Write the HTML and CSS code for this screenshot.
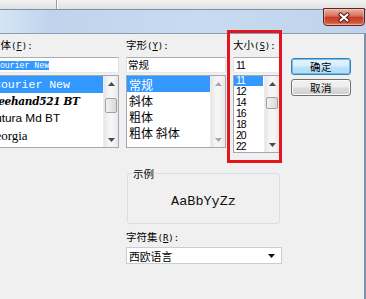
FILE: index.html
```html
<!DOCTYPE html>
<html lang="zh-CN">
<head>
<meta charset="utf-8">
<title>字体</title>
<link rel="stylesheet" href="styles.css">
</head>
<body>
<div class="screen">
  <div class="behind"><span class="behind-sep"></span></div>
  <div class="dialog">
    <div class="titlebar">
      <div class="close-btn">
        <svg width="14" height="11" viewBox="0 0 14 11">
          <path d="M3.5 2.5 L10.5 8.5 M10.5 2.5 L3.5 8.5" stroke="#4a1a14" stroke-width="4.2" stroke-linecap="round"/>
          <path d="M3.5 2.5 L10.5 8.5 M10.5 2.5 L3.5 8.5" stroke="#ffffff" stroke-width="2.2" stroke-linecap="round"/>
        </svg>
      </div>
    </div>
    <div class="client">
      <div class="top">
        <div class="col col-font">
          <div class="lbl">字体<span class="k">(<u>F</u>):</span></div>
          <div class="edit edit-font"><span class="hl">Courier New</span></div>
          <div class="list list-std">
            <div class="items">
              <div class="item row-font sel f-courier">Courier New</div>
              <div class="item row-font f-freehand">Freehand521 BT</div>
              <div class="item row-font f-futura">Futura Md BT</div>
              <div class="item row-font f-georgia">Georgia</div>
            </div>
            <div class="sb">
              <div class="sb-btn"><svg width="7" height="4" viewBox="0 0 7 4"><path d="M0 4 L3.5 0 L7 4Z" class="arr"/></svg></div>
              <div class="sb-track"><div class="thumb thumb-font"></div></div>
              <div class="sb-btn"><svg width="7" height="4" viewBox="0 0 7 4"><path d="M0 0 L3.5 4 L7 0Z" class="arr"/></svg></div>
            </div>
          </div>
        </div>

        <div class="col col-style">
          <div class="lbl">字形<span class="k">(<u>Y</u>):</span></div>
          <div class="edit edit-style">常规</div>
          <div class="list list-std">
            <div class="items">
              <div class="item row-style sel">常规</div>
              <div class="item row-style">斜体</div>
              <div class="item row-style">粗体</div>
              <div class="item row-style">粗体 斜体</div>
            </div>
            <div class="sb">
              <div class="sb-btn"><svg width="7" height="4" viewBox="0 0 7 4"><path d="M0 4 L3.5 0 L7 4Z" class="arr dim"/></svg></div>
              <div class="sb-track"></div>
              <div class="sb-btn"><svg width="7" height="4" viewBox="0 0 7 4"><path d="M0 0 L3.5 4 L7 0Z" class="arr dim"/></svg></div>
            </div>
          </div>
        </div>

        <div class="col col-size">
          <div class="lbl">大小<span class="k">(<u>S</u>):</span></div>
          <div class="edit edit-size">11</div>
          <div class="list list-size">
            <div class="items items-size">
              <div class="item row-size sel">11</div>
              <div class="item row-size">12</div>
              <div class="item row-size">14</div>
              <div class="item row-size">16</div>
              <div class="item row-size">18</div>
              <div class="item row-size">20</div>
              <div class="item row-size">22</div>
            </div>
            <div class="sb">
              <div class="sb-btn"><svg width="7" height="4" viewBox="0 0 7 4"><path d="M0 4 L3.5 0 L7 4Z" class="arr"/></svg></div>
              <div class="sb-track"><div class="thumb thumb-size"></div></div>
              <div class="sb-btn"><svg width="7" height="4" viewBox="0 0 7 4"><path d="M0 0 L3.5 4 L7 0Z" class="arr"/></svg></div>
            </div>
          </div>
        </div>

        <div class="col col-btn">
          <div class="btn btn-default">确定</div>
          <div class="btn">取消</div>
        </div>
      </div>

      <div class="bottom">
        <div class="group">
          <div class="group-title">示例</div>
          <div class="sample-text">AaBbYyZz</div>
        </div>
        <div class="lbl charset-lbl">字符集<span class="k">(<u>R</u>):</span></div>
        <div class="combo">
          <span class="combo-text">西欧语言</span>
          <svg width="7" height="4" viewBox="0 0 7 4"><path d="M0 0 L3.5 4 L7 0Z" fill="#111"/></svg>
        </div>
      </div>
    </div>
  </div>
  <div class="mark"></div>
</div>
</body>
</html>
```
FILE: styles.css
```css
* { box-sizing: border-box; }
html, body { margin: 0; padding: 0; }
body {
  width: 366px;
  height: 299px;
  overflow: hidden;
  background: #f0f0f0;
  font-family: "Noto Sans CJK SC", sans-serif;
  color: #000;
}
.screen {
  position: relative;
  width: 366px;
  height: 299px;
  overflow: hidden;
  display: flex;
  flex-direction: column;
}
.behind {
  height: 9px;
  flex: none;
  background: linear-gradient(#f3f3f3, #e0e0e0);
  display: flex;
  padding-left: 56px;
}
.behind-sep {
  width: 1px;
  background: #9c9c9c;
  box-shadow: 1px 0 0 #ffffff;
}
.dialog {
  flex: 1;
  display: flex;
  flex-direction: column;
  min-height: 0;
}
.titlebar {
  height: 25px;
  flex: none;
  border-top: 1px solid #7c8fa6;
  border-bottom: 1px solid #8a9db5;
  background: linear-gradient(90deg, #d5e5f5 0%, #bfd4ec 14%, #c7dbf0 55%, #bed3eb 100%);
  display: flex;
  justify-content: flex-end;
  align-items: flex-start;
  padding-right: 1px;
}
.close-btn {
  width: 42px;
  height: 18px;
  margin-top: -2px;
  border: 1px solid #5b2820;
  border-radius: 0 0 4px 4px;
  background: linear-gradient(#ebb3a6 0%, #d96d58 45%, #c63d25 52%, #d05539 85%, #e48a6b 100%);
  box-shadow: inset 0 0 0 1px rgba(255, 220, 210, 0.45);
  display: flex;
  align-items: center;
  justify-content: center;
}
.client {
  flex: 1;
  position: relative;
  border-right: 2px solid #7f92a9;
  padding-top: 5px;
}
.top {
  display: flex;
  align-items: flex-start;
  margin-left: -10px;
}
.col { display: flex; flex-direction: column; }
.col-font { width: 129px; }
.col-style { width: 100px; margin-left: 7px; }
.col-size { width: 47px; margin-left: 7px; }
.col-btn { width: 60px; margin-left: 11px; margin-top: 19px; gap: 4px; }

.lbl {
  height: 12px;
  line-height: 12px;
  font-size: 10.5px;
  white-space: nowrap;
}
.k {
  font-family: "DejaVu Sans Mono", monospace;
  font-size: 9px;
}
.k u { text-underline-offset: 1px; }

.edit {
  margin-top: 6px;
  height: 16px;
  background: #fff;
  border: 1px solid;
  border-color: #abadb3 #dbdfe6 #e3e9ef #e2e3ea;
  display: flex;
  align-items: center;
  white-space: nowrap;
  overflow: hidden;
}
.edit-font {
  padding-left: 4px;
  font-family: "Liberation Mono", monospace;
  font-size: 8.2px;
}
.hl {
  background: #3399ff;
  color: #fff;
  line-height: 9px;
  height: 9px;
  margin-top: 1px;
}
.edit-style {
  padding-left: 1px;
  font-size: 10.5px;
  line-height: 14px;
}
.edit-size {
  padding-left: 2px;
  font-family: "Liberation Sans", sans-serif;
  font-size: 10.5px;
  letter-spacing: -1px;
}

.list {
  margin-top: 2px;
  background: #fff;
  border: 1px solid #a3a9b1;
  display: flex;
  overflow: hidden;
}
.list-std { height: 73px; }
.list-size { height: 78px; }
.items {
  flex: 1;
  min-width: 0;
  overflow: hidden;
}
.items-size { margin-top: -1px; }
.item {
  white-space: nowrap;
  padding-left: 3px;
}
.item.sel { background: #3399ff; color: #fff; }

.row-font { height: 17px; line-height: 17px; }
.f-courier { font-family: "Liberation Mono", monospace; font-size: 11.5px; }
.f-freehand {
  font-family: "DejaVu Serif", serif;
  font-style: italic;
  font-weight: bold;
  font-size: 10.5px;
  letter-spacing: -0.3px;
  text-indent: -8px;
}
.f-futura { font-family: "Liberation Sans", sans-serif; font-size: 11.8px; text-indent: -6px; }
.f-georgia { font-family: "Liberation Serif", serif; font-size: 13px; text-indent: -8px; }

.row-style {
  height: 16px;
  line-height: 18px;
  font-size: 12px;
  padding-left: 2px;
}
.row-size {
  height: 11px;
  line-height: 11px;
  font-family: "Liberation Sans", sans-serif;
  font-size: 10.5px;
  letter-spacing: -1px;
  padding-left: 2px;
  margin-right: 1px;
}

.sb {
  width: 15px;
  flex: none;
  display: flex;
  flex-direction: column;
  background: linear-gradient(90deg, #e6e6e8, #f5f5f6 35%, #f5f5f6 65%, #e8e8ea);
  border-left: 1px solid #ececec;
}
.sb-btn {
  height: 15px;
  flex: none;
  display: flex;
  align-items: center;
  justify-content: center;
}
.sb-track { flex: 1; }
.arr { fill: #4a4a4a; }
.arr.dim { fill: #a8a8a8; }
.thumb {
  margin: 0 1px;
  border: 1px solid #a0a0a0;
  border-radius: 2px;
  background: linear-gradient(90deg, #f4f4f4, #e6e6e6 50%, #d8d8d8);
}
.thumb-font { margin-top: 7px; height: 15px; }
.thumb-size { margin-top: 6px; height: 12px; }

.btn {
  height: 17px;
  border: 1px solid #707070;
  border-radius: 3px;
  background: linear-gradient(#f2f2f2 0%, #ebebeb 48%, #dddddd 52%, #cfcfcf 100%);
  box-shadow: inset 0 0 0 1px #fbfbfb;
  font-size: 10.5px;
  line-height: 15px;
  text-align: center;
  letter-spacing: 0.5px;
}
.btn-default {
  border-color: #3c7fb1;
  background: linear-gradient(#e5f4fc 0%, #d5edfb 48%, #bfe3f9 52%, #b0daf5 100%);
  box-shadow: inset 0 0 0 1px #6ec1ee;
}

.bottom {
  margin-left: 126px;
  width: 156px;
}
.group {
  margin: 20px 0 0 1px;
  width: 153px;
  height: 51px;
  border: 1px solid #d5dfe5;
  border-radius: 3px;
}
.group-title {
  width: max-content;
  height: 11px;
  margin: -6px 0 0 4px;
  padding: 0 1px;
  background: #f0f0f0;
  font-size: 10.5px;
  line-height: 11px;
}
.sample-text {
  margin-top: 16px;
  text-align: center;
  font-family: "Liberation Mono", monospace;
  font-size: 13.5px;
  line-height: 14px;
  color: #111;
}
.charset-lbl { margin-top: 7px; }
.combo {
  margin-top: 4px;
  height: 17px;
  background: #fff;
  border: 1px solid #cacdd2;
  display: flex;
  align-items: center;
  justify-content: space-between;
  padding: 0 6px 0 2px;
}
.combo-text {
  font-size: 10.8px;
  line-height: 14px;
}

.mark {
  position: absolute;
  left: 227px;
  top: 30px;
  width: 55px;
  height: 133px;
  border: 3px solid #e3161e;
}
```
